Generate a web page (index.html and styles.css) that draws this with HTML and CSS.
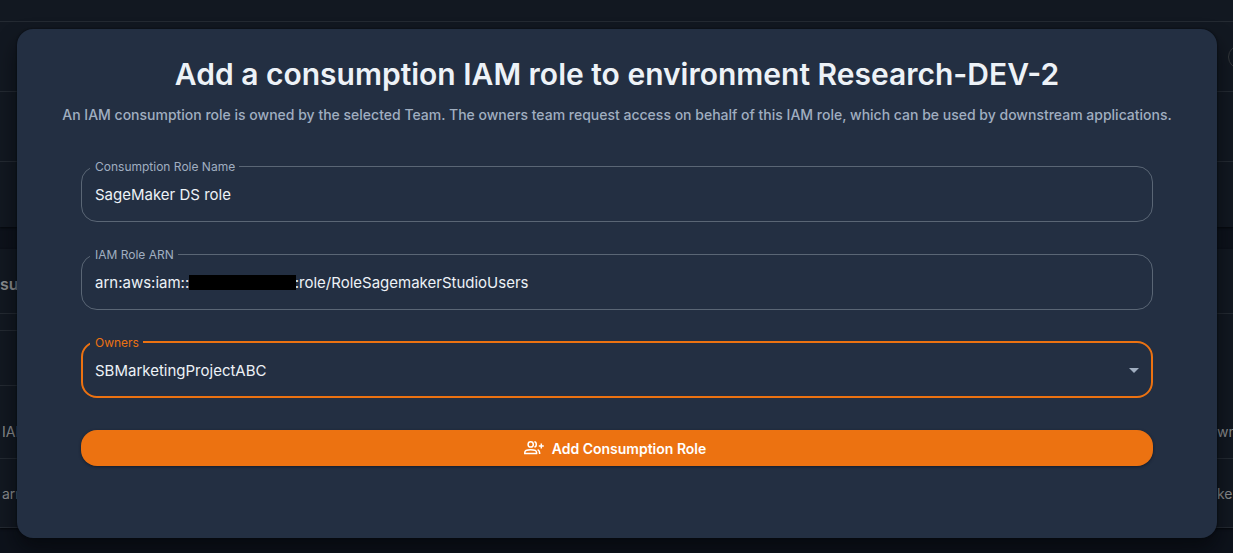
FILE: index.html
```html
<!DOCTYPE html>
<html lang="en">
<head>
<meta charset="utf-8">
<meta name="viewport" content="width=device-width, initial-scale=1">
<title>Add a consumption IAM role</title>
<link rel="stylesheet" href="styles.css">
</head>
<body>
<div class="page" aria-hidden="true">
  <div class="panel">
    <div class="line line-head"></div>
    <div class="line line-row line-end"><span class="chip"></span></div>
    <div class="line line-row"></div>
    <div class="line line-last"></div>
  </div>
  <div class="panel">
    <div class="line line-title"><span>su</span></div>
    <div class="line line-gap"></div>
    <div class="line line-search"></div>
    <div class="line line-columns"><span>IAM</span><span class="col-end">wn</span></div>
    <div class="line line-item"><span>arn</span><span class="col-end">ke</span></div>
  </div>
</div>

<div class="overlay">
  <main class="dialog" role="dialog" aria-labelledby="dialog-title">
    <h1 class="title" id="dialog-title">Add a consumption IAM role to environment Research-DEV-2</h1>
    <p class="subtitle">An IAM consumption role is owned by the selected Team. The owners team request access on behalf of this IAM role, which can be used by downstream applications.</p>
    <form class="form">
      <fieldset class="field">
        <legend class="legend"><label for="role-name">Consumption Role Name</label></legend>
        <input class="control" id="role-name" type="text" value="SageMaker DS role">
      </fieldset>
      <fieldset class="field">
        <legend class="legend"><label for="role-arn">IAM Role ARN</label></legend>
        <div class="control-wrap">
          <input class="control" id="role-arn" type="text" value="arn:aws:iam::&nbsp;&nbsp;&nbsp;&nbsp;&nbsp;&nbsp;&nbsp;&nbsp;&nbsp;&nbsp;&nbsp;&nbsp;&nbsp;&nbsp;&nbsp;&nbsp;&nbsp;&nbsp;&nbsp;&nbsp;&nbsp;&nbsp;&nbsp;&nbsp;&nbsp;:role/RoleSagemakerStudioUsers">
          <span class="redaction"></span>
        </div>
      </fieldset>
      <fieldset class="field field-active">
        <legend class="legend"><label for="owners">Owners</label></legend>
        <div class="control-wrap">
          <select class="control" id="owners"><option>SBMarketingProjectABC</option></select>
          <svg class="arrow" viewBox="0 0 24 24" aria-hidden="true"><path d="M7 10l5 5 5-5z" fill="currentColor"/></svg>
        </div>
      </fieldset>
      <button class="submit" type="button">
        <svg class="submit-icon" viewBox="0 0 20 20" fill="none" stroke="currentColor" stroke-width="1.5" aria-hidden="true">
          <circle cx="6.7" cy="6.4" r="2.6"/>
          <path d="M.8 15.4v-1c0-1.7 2.6-2.7 5.9-2.7s5.9 1 5.9 2.7v1z"/>
          <path d="M10.4 3.8c2.5.2 2.5 5 0 5.2M13.6 11.6c1.6.6 2.1 1.6 2.1 4.5M17.3 5.6v5M14.8 8.1h5"/>
        </svg>
        <span>Add Consumption Role</span>
      </button>
    </form>
  </main>
</div>
</body>
</html>
```
FILE: styles.css
```css
* {
  box-sizing: border-box;
}

body {
  margin: 0;
  min-height: 100vh;
  overflow: hidden;
  background: #0d121b;
  color: #edf2f7;
  font-family: Inter, "Liberation Sans", sans-serif;
}

.page {
  display: grid;
  gap: 22px;
  color: #8a8c8e;
  font-size: 14px;
}

.panel {
  background: #121821;
  box-shadow: 0 1px 2px #05080c;
}

.line {
  display: flex;
  justify-content: space-between;
  align-items: center;
  padding-left: 2px;
  border-bottom: 1px solid #242a32;
}

.line-head { height: 22px; }
.line-row { height: 70px; }
.line-last { height: 65px; border-bottom: 0; }
.line-title { height: 65px; padding: 6px 0 0; font-size: 16px; font-weight: 600; }
.line-gap { width: 50%; height: 17px; }
.line-search { width: 50%; height: 55px; }
.line-columns { height: 73px; padding-top: 18px; }
.line-item { height: 69px; }
.line-end { justify-content: flex-end; overflow: hidden; }

.col-end {
  width: 16px;
}

.chip {
  width: 24px;
  height: 24px;
  margin-right: -19px;
  border: 1px solid #33373b;
  border-radius: 50%;
}

.overlay {
  position: absolute;
  inset: 0;
  padding: 29px 16px 15px 17px;
}

.dialog {
  max-width: 1200px;
  margin: 0 auto;
  padding: 24px 64px 72px;
  border-radius: 16px;
  background: #232f42;
  box-shadow: 0 0 2px #05080c, 0 12px 20px rgba(3, 5, 8, 0.6);
}

.title {
  margin: 0 -32px;
  font-size: 30px;
  font-weight: 600;
  line-height: 42px;
  text-align: center;
}

.subtitle {
  margin: 9px -32px 0;
  color: #a0aec0;
  font-size: 14px;
  font-weight: 500;
  line-height: 22px;
  text-align: center;
}

.form {
  display: grid;
  gap: 26px;
  margin-top: 34px;
}

.field {
  min-width: 0;
  height: 62px;
  margin: 0;
  padding: 0 8px;
  border: 1px solid #5a6675;
  border-radius: 16px;
}

.field-active {
  padding: 0 7px;
  border: 2px solid #ec7211;
}

.legend {
  height: 12px;
  padding: 0 4px 0 5px;
  color: #a0aec0;
  font-size: 12px;
  line-height: 14px;
}

.field-active .legend {
  color: #ec7211;
}

.control-wrap {
  position: relative;
}

.control {
  display: block;
  width: 100%;
  height: 44px;
  padding: 0 5px;
  border: 0;
  outline: 0;
  appearance: none;
  background: transparent;
  color: #edf2f7;
  font-family: inherit;
  font-size: 15px;
}

.redaction {
  position: absolute;
  top: 15px;
  left: 99px;
  width: 107px;
  height: 15px;
  background: #000;
}

.arrow {
  position: absolute;
  top: 10px;
  right: -2px;
  width: 24px;
  height: 24px;
  color: #a0aec0;
  pointer-events: none;
}

.submit {
  display: flex;
  justify-content: center;
  align-items: center;
  gap: 8px;
  height: 36px;
  margin-top: 6px;
  padding: 0 20px 0 16px;
  border: 0;
  border-radius: 16px;
  background: #ec7211;
  box-shadow: 0 1px 3px #141c2b;
  color: #fff;
  font-family: inherit;
  font-size: 14px;
  font-weight: 600;
}

.submit-icon {
  width: 20px;
  height: 20px;
}
```
